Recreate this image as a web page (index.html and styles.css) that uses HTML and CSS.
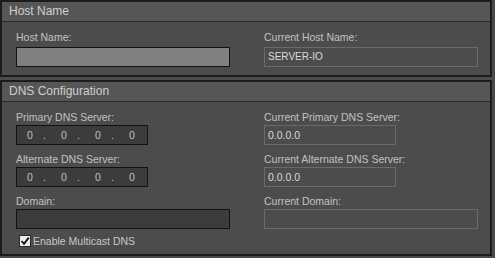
FILE: index.html
```html
<!DOCTYPE html>
<html lang="en">
  <head>
    <meta charset="UTF-8">
    <title>Network Settings</title>
    <link rel="stylesheet" href="styles.css">
  </head>
  <body>
    <div class="panel">
      <section class="group">
        <div class="group-title">Host Name</div>
        <div class="group-body host-body">
          <div class="field">
            <label class="field-label">Host Name:</label>
            <div class="input input-light input-wide"></div>
          </div>
          <div class="field">
            <label class="field-label">Current Host Name:</label>
            <div class="readout readout-wide readout-caps">SERVER-IO</div>
          </div>
        </div>
      </section>

      <section class="group">
        <div class="group-title">DNS Configuration</div>
        <div class="group-body dns-body">
          <div class="column">
            <div class="field">
              <label class="field-label">Primary DNS Server:</label>
              <div class="input input-dark ip-box">
                <span class="octet">0</span><span class="dot">.</span><span class="octet">0</span><span class="dot">.</span><span class="octet">0</span><span class="dot">.</span><span class="octet">0</span>
              </div>
            </div>
            <div class="field">
              <label class="field-label">Alternate DNS Server:</label>
              <div class="input input-dark ip-box">
                <span class="octet">0</span><span class="dot">.</span><span class="octet">0</span><span class="dot">.</span><span class="octet">0</span><span class="dot">.</span><span class="octet">0</span>
              </div>
            </div>
            <div class="field">
              <label class="field-label">Domain:</label>
              <div class="input input-dark input-wide"></div>
            </div>
            <div class="check-row">
              <span class="checkbox">
                <svg width="10" height="10" viewBox="0 0 10 10"><path d="M1.5 5 L4 7.8 L8.8 1.6" fill="none" stroke="#111" stroke-width="1.8"/></svg>
              </span>
              <span class="check-label">Enable Multicast DNS</span>
            </div>
          </div>
          <div class="column">
            <div class="field">
              <label class="field-label">Current Primary DNS Server:</label>
              <div class="readout readout-short">0.0.0.0</div>
            </div>
            <div class="field">
              <label class="field-label">Current Alternate DNS Server:</label>
              <div class="readout readout-short">0.0.0.0</div>
            </div>
            <div class="field">
              <label class="field-label">Current Domain:</label>
              <div class="readout readout-wide"></div>
            </div>
          </div>
        </div>
      </section>
    </div>
  </body>
</html>
```

FILE: styles.css
```css
body {
  margin: 0;
  padding: 0;
  background-color: #4b4b4b;
  font-family: 'Liberation Sans', Arial, sans-serif;
  color: #c4c4c4;
}

.panel {
  width: 492px;
  display: flex;
  flex-direction: column;
  gap: 3px;
}

.group {
  border: 2px solid #1c1c1c;
  background-color: #4c4c4c;
}

.group-title {
  height: 19px;
  line-height: 19px;
  padding-left: 7px;
  font-size: 12px;
  color: #cfcfcf;
  background-color: #565656;
  border-bottom: 1px solid #2b2b2b;
}

.group-body {
  display: grid;
  grid-template-columns: 248px 1fr;
  padding: 8px 0 8px 14px;
}

.column {
  display: flex;
  flex-direction: column;
  gap: 7px;
}

.field {
  display: flex;
  flex-direction: column;
}

.field-label {
  font-size: 10.5px;
  line-height: 14px;
  height: 14px;
  margin-bottom: 1px;
  color: #c2c2c2;
}

.host-body .field-label {
  margin-bottom: 3px;
}

.dns-body {
  padding-bottom: 6px;
}

.input {
  box-sizing: border-box;
  height: 20px;
  border: 1px solid #121212;
}

.input-light {
  background-color: #808080;
}

.input-dark {
  background-color: #3c3c3c;
}

.input-wide {
  width: 214px;
}

.ip-box {
  width: 132px;
  display: flex;
  align-items: center;
  padding-left: 2px;
  font-size: 10.5px;
  color: #c0c0c0;
}

.octet {
  width: 22px;
  text-align: center;
}

.dot {
  width: 12px;
  padding-left: 2px;
  box-sizing: border-box;
}

.readout {
  box-sizing: border-box;
  height: 20px;
  line-height: 18px;
  padding-left: 3px;
  border: 1px solid #6a6a6a;
  font-size: 10.5px;
  color: #dadada;
}

.readout-caps {
  font-size: 10px;
}

.readout-wide {
  width: 214px;
}

.readout-short {
  width: 132px;
}

.check-row {
  display: flex;
  align-items: center;
  height: 14px;
  margin-top: -2px;
  padding-left: 3px;
}

.checkbox {
  box-sizing: border-box;
  width: 12px;
  height: 12px;
  border: 1px solid #2a2a2a;
  background-color: #ececec;
  display: flex;
  align-items: center;
  justify-content: center;
  margin-right: 2px;
}

.check-label {
  font-size: 10.5px;
  line-height: 14px;
  color: #c8c8c8;
}
```
